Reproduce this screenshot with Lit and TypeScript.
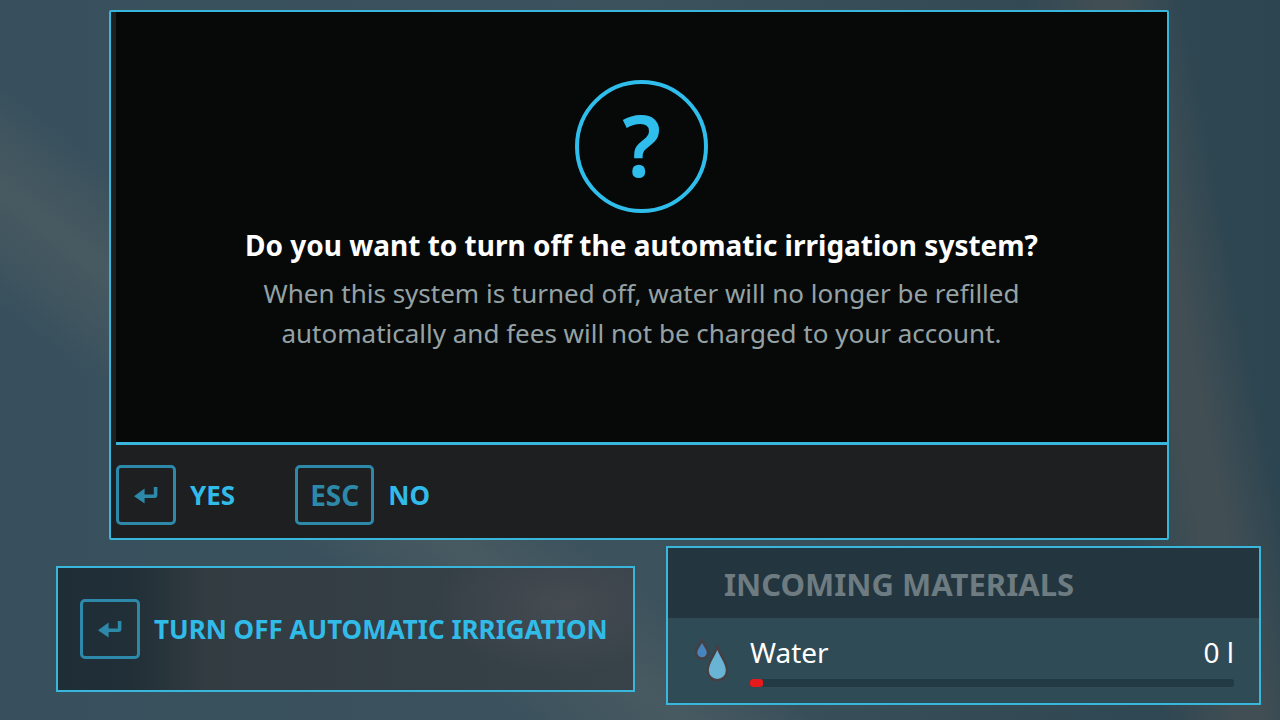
import { LitElement, html, css, svg } from "lit";
import { customElement, property } from "lit/decorators.js";

@customElement("key-cap")
class KeyCap extends LitElement {
  @property() label = "";

  static styles = css`
    :host {
      display: block;
      flex: none;
    }
    .cap {
      box-sizing: border-box;
      display: flex;
      align-items: center;
      justify-content: center;
      min-width: 60px;
      height: 60px;
      padding: 0 12px;
      border: 3px solid #2c89a9;
      border-radius: 5px;
      color: #2c89a9;
      font: 700 28px/32px "Noto Sans", sans-serif;
    }
    .arrow {
      display: block;
      width: 24px;
      height: 17px;
    }
  `;

  render() {
    const arrow = svg`<path fill="currentColor" d="M0 9.2 10.6 1.6V7.4H19.8V0H23.4V8.6Q23.4 11 21 11H10.6V16.6Z"/>`;
    return html`<kbd class="cap">${this.label
      ? this.label
      : html`<svg class="arrow" viewBox="0 0 24 17" role="img" aria-label="Enter">${arrow}</svg>`}</kbd>`;
  }
}

@customElement("material-row")
class MaterialRow extends LitElement {
  @property() name = "";
  @property() amount = "";
  @property({ type: Number }) percent = 0;

  static styles = css`
    :host {
      display: flex;
      gap: 22px;
      padding: 16px 25px 0 26px;
    }
    .drops {
      flex: none;
      width: 34px;
      height: 48px;
    }
    .info {
      flex: 1;
    }
    .line {
      display: flex;
      justify-content: space-between;
      color: #fff;
      font: 400 28px/36px "Noto Sans", sans-serif;
    }
    .bar {
      height: 8px;
      margin-top: 9px;
      border-radius: 3px;
      background: #223a43;
    }
    .fill {
      height: 100%;
      min-width: 13px;
      border-radius: 3px;
      background: #e61a1c;
    }
  `;

  render() {
    return html`
      <svg class="drops" viewBox="0 0 34 48" aria-hidden="true">
        <g stroke="#453f43" stroke-width="2.4" stroke-linejoin="round">
          <path fill="#4684bd" d="M8 6C9.500 11 14 14 14 18.500A6 6 0 0 1 2 18.500C2 14 6.500 11 8 6Z" />
          <path fill="#69b3d5" d="M23.300 12.500C26 22 33 28 33 36.500A9.600 9.600 0 0 1 13.600 36.500C13.600 28 20.600 22 23.300 12.500Z" />
        </g>
      </svg>
      <div class="info">
        <div class="line"><span id="name">${this.name}</span><span>${this.amount}</span></div>
        <div class="bar" role="progressbar" aria-labelledby="name" aria-valuenow=${this.percent}>
          <div class="fill" style="width:${this.percent}%"></div>
        </div>
      </div>
    `;
  }
}

@customElement("app-root")
class AppRoot extends LitElement {
  static styles = css`
    :host {
      display: block;
      box-sizing: border-box;
      min-height: 100vh;
      padding: 10px 19px 15px 56px;
      font-family: "Noto Sans", sans-serif;
      background:
        linear-gradient(79deg, transparent 82%, #414e54 87%, #414e54 89%, transparent 93%),
        linear-gradient(38deg, transparent 24%, #485a61 31%, transparent 37%),
        linear-gradient(90deg, #38505d 0%, #3c525d 50%, #2d4550 100%);
    }
    .dialog {
      margin: 0 92px 0 53px;
      border: 2px solid #38b6dc;
      border-radius: 2px;
      padding-left: 5px;
      background: #1d1f20;
    }
    .message {
      box-sizing: border-box;
      display: flex;
      flex-direction: column;
      align-items: center;
      min-height: 433px;
      padding: 68px 120px 0;
      border-bottom: 3px solid #38b6dc;
      background: #070908;
      text-align: center;
    }
    .badge {
      box-sizing: border-box;
      display: flex;
      align-items: center;
      justify-content: center;
      width: 133px;
      height: 133px;
      padding-bottom: 4px;
      border: 4px solid #2fbdec;
      border-radius: 50%;
      color: #2fbdec;
      font-size: 84px;
      font-weight: 600;
      line-height: 120px;
    }
    .title {
      margin: 13px 0 0;
      color: #fff;
      font-size: 28px;
      font-weight: 700;
      line-height: 38px;
    }
    .text {
      max-width: 780px;
      margin: 9px 0 0;
      color: #95a2a5;
      font-size: 26px;
      line-height: 40px;
    }
    .actions {
      display: flex;
      gap: 60px;
      padding: 20px 0 13px;
    }
    button {
      display: flex;
      align-items: center;
      gap: 14px;
      padding: 0;
      border: 0;
      background: none;
      color: #31bbe9;
      font: 700 26px/36px "Noto Sans", sans-serif;
      white-space: nowrap;
      cursor: pointer;
    }
    .bottom {
      display: grid;
      grid-template-columns: 579fr 595fr;
      gap: 31px;
      align-items: center;
      margin-top: 6px;
    }
    .toggle {
      height: 126px;
      margin-top: 7px;
      padding: 0 22px;
      border: 2px solid #38b6dc;
      background:
        radial-gradient(ellipse 130px 70px at 88% 30%, #454b51, rgba(69, 75, 81, 0)),
        linear-gradient(90deg, #1e2e37 0%, #212f37 13%, #323c41 26%, #354046 70%, #374349 100%);
    }
    .materials {
      box-sizing: border-box;
      min-height: 159px;
      border: 2px solid #38b6dc;
      background: #2f4b56;
    }
    .heading {
      margin: 0;
      padding: 17px 56px 15px;
      background: #23363f;
      color: #6e7b81;
      font-size: 31px;
      font-weight: 700;
      line-height: 38px;
    }
  `;

  render() {
    return html`
      <section class="dialog" role="dialog" aria-labelledby="title">
        <div class="message">
          <div class="badge">?</div>
          <h1 class="title" id="title">Do you want to turn off the automatic irrigation system?</h1>
          <p class="text">
            When this system is turned off, water will no longer be refilled automatically and fees will not be charged to your account.
          </p>
        </div>
        <div class="actions">
          <button><key-cap></key-cap>YES</button>
          <button><key-cap label="ESC"></key-cap>NO</button>
        </div>
      </section>
      <div class="bottom">
        <button class="toggle"><key-cap></key-cap>TURN OFF AUTOMATIC IRRIGATION</button>
        <section class="materials">
          <h2 class="heading">INCOMING MATERIALS</h2>
          <material-row name="Water" amount="0 l" percent="2"></material-row>
        </section>
      </div>
    `;
  }
}
